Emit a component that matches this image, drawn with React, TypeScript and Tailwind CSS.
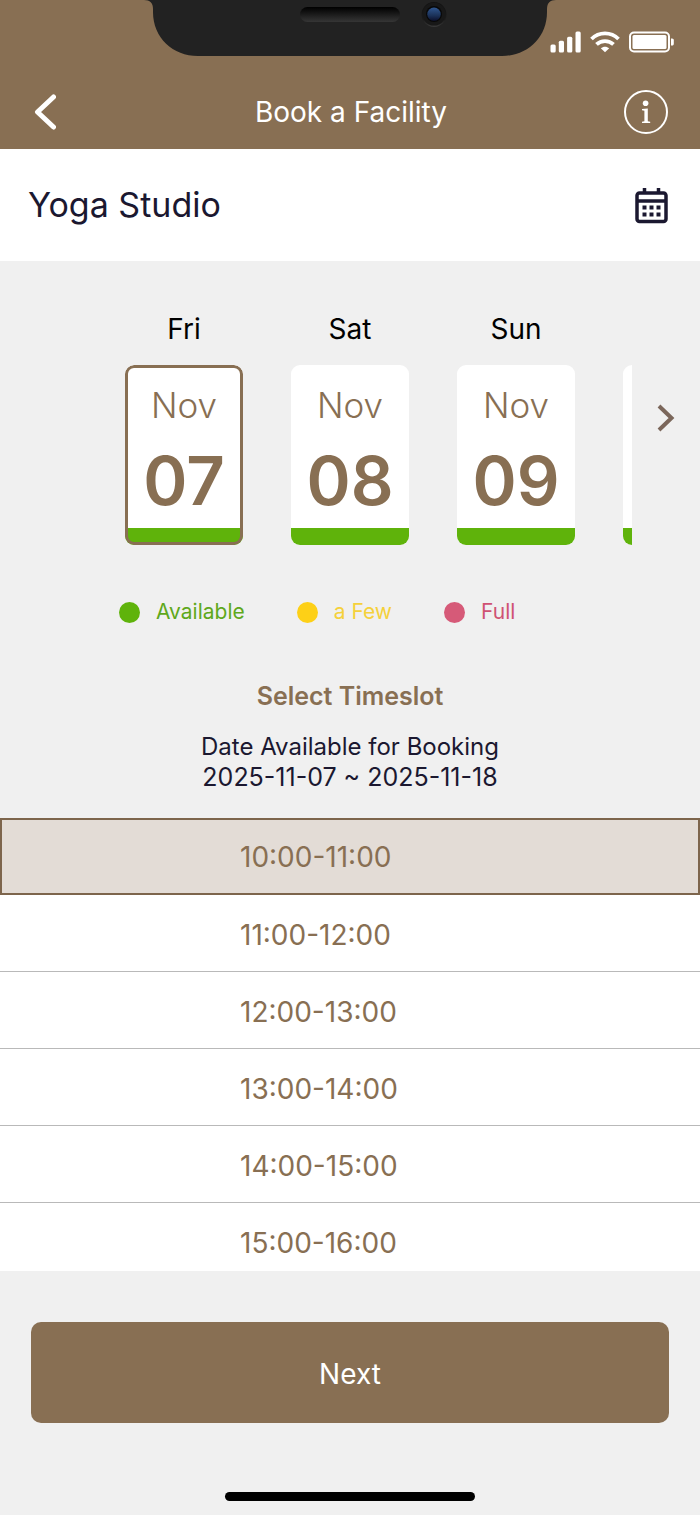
import { useState } from 'react';

const DAYS = [
  { weekday: 'Fri', month: 'Nov', day: '07' },
  { weekday: 'Sat', month: 'Nov', day: '08' },
  { weekday: 'Sun', month: 'Nov', day: '09' },
];

const LEGEND = [
  { label: 'Available', dot: 'bg-[#5fb30b]', text: 'text-[#5fa81c]' },
  { label: 'a Few', dot: 'bg-[#fdd017]', text: 'text-[#f5d13b]' },
  { label: 'Full', dot: 'bg-[#d65a78]', text: 'text-[#cf5273]' },
];

const SLOTS = [
  '10:00-11:00',
  '11:00-12:00',
  '12:00-13:00',
  '13:00-14:00',
  '14:00-15:00',
  '15:00-16:00',
];

export default function App() {
  const [day, setDay] = useState('07');
  const [slot, setSlot] = useState(SLOTS[0]);

  return (
    <div className="flex min-h-screen flex-col bg-[#f0f0f0] font-['Inter',sans-serif] text-[#1b1830]">
      <Header />

      <div className="flex h-28 items-center justify-between bg-white pr-8 pl-7">
        <h2 className="text-[34px] leading-10">Yoga Studio</h2>
        <button type="button" aria-label="Open calendar">
          <CalendarIcon />
        </button>
      </div>

      <DayStrip selected={day} onSelect={setDay} />

      {/* Legend */}
      <ul className="mt-[51px] ml-[119px] flex gap-[52px] text-[21px] leading-8">
        {LEGEND.map((item) => (
          <li key={item.label} className={`flex items-center gap-4 ${item.text}`}>
            <span className={`size-[21px] rounded-full ${item.dot}`} />
            {item.label}
          </li>
        ))}
      </ul>

      <div className="mt-[53px] mb-[26px] text-center text-[25px] leading-[30px]">
        <h3 className="mb-[21px] font-semibold text-[#886f53]">Select Timeslot</h3>
        <p className="text-[24px]">Date Available for Booking</p>
        <p>2025-11-07 ~ 2025-11-18</p>
      </div>

      <SlotList selected={slot} onSelect={setSlot} />

      <div className="px-[31px] pt-[51px]">
        <button
          type="button"
          className="h-[101px] w-full rounded-[10px] bg-[#886f53] pt-0.5 text-[28px] leading-9 text-white"
        >
          Next
        </button>
      </div>

      {/* Home indicator */}
      <div className="mx-auto mt-auto mb-3.5 h-[9px] w-[250px] rounded-full bg-black" />
    </div>
  );
}

function Header() {
  return (
    <header className="relative bg-[#886f53] text-white">
      <div className="absolute inset-x-0 top-0 flex justify-center">
        <Notch />
      </div>
      <div className="flex h-[74px] items-end justify-end pr-[26px] pb-[21px]">
        <StatusIcons />
      </div>
      <div className="grid h-[75px] grid-cols-[1fr_auto_1fr] items-center pr-8 pl-[34px]">
        <button type="button" aria-label="Back" className="justify-self-start">
          <svg width="22" height="36" viewBox="0 0 22 36" fill="none" className="block">
            <path
              d="M19.5 3 3.5 18l16 15"
              stroke="currentColor"
              strokeWidth="5"
              strokeLinecap="round"
              strokeLinejoin="round"
            />
          </svg>
        </button>
        <h1 className="text-[28px] leading-9">Book a Facility</h1>
        <button
          type="button"
          aria-label="Information"
          className="flex size-11 items-center justify-center justify-self-end rounded-full border-2 border-white"
        >
          <svg width="10" height="24" viewBox="0 0 10 24" fill="currentColor">
            <circle cx="4.6" cy="3.2" r="2.8" />
            <path d="M1 9.1 6.8 8.4V21.2l2.4.6V23H1v-1.2l2.4-.6V10.8L1 10.3z" />
          </svg>
        </button>
      </div>
    </header>
  );
}

function Notch() {
  return (
    <svg width="412" height="57" viewBox="0 0 412 57" className="block">
      <defs>
        <linearGradient id="speaker" x1="0" y1="0" x2="0" y2="1">
          <stop offset="0" stopColor="#000" />
          <stop offset="1" stopColor="#363636" />
        </linearGradient>
        <linearGradient id="rim" x1="0" y1="0" x2="0" y2="1">
          <stop offset="0" stopColor="#111" />
          <stop offset="0.7" stopColor="#1c1c1c" />
          <stop offset="1" stopColor="#3a3a3a" />
        </linearGradient>
        <linearGradient id="lens" x1="0" y1="0" x2="0" y2="1">
          <stop offset="0" stopColor="#2f568f" />
          <stop offset="0.6" stopColor="#1b3158" />
          <stop offset="1" stopColor="#0b0f2a" />
        </linearGradient>
      </defs>
      <path
        d="M0 0c6 0 9 3 9 9v3c0 26 20 44 45 44h304c25 0 45-18 45-44V9c0-6 3-9 9-9z"
        fill="#222"
      />
      <rect x="156" y="7" width="100" height="15" rx="7.5" fill="url(#speaker)" />
      <circle cx="290" cy="14.5" r="12.5" fill="url(#rim)" />
      <circle cx="290" cy="14" r="11.5" fill="#181818" />
      <circle cx="290" cy="14" r="8" fill="#080808" />
      <circle cx="290" cy="14.3" r="6.7" fill="url(#lens)" />
    </svg>
  );
}

function StatusIcons() {
  return (
    <svg width="124" height="22" viewBox="0 0 124 22" fill="currentColor" className="block">
      {/* signal */}
      <rect x="0.5" y="13.5" width="5.2" height="8" rx="1.5" />
      <rect x="8.8" y="9.7" width="5.2" height="11.8" rx="1.5" />
      <rect x="17.1" y="5.7" width="5.2" height="15.8" rx="1.5" />
      <rect x="25.5" y="0.5" width="5.2" height="21" rx="1.5" />
      {/* wifi */}
      <g fill="none" stroke="currentColor" strokeWidth="3.8">
        <path d="M41.5 8C49 .6 61 .6 68.500 8" />
        <path d="M46.500 13.400c4.700-4.500 12.300-4.500 17 0" />
      </g>
      <path d="M50.800 17.200c2.500-2.100 5.900-2.100 8.400 0L55 21.300z" />
      {/* battery */}
      <rect x="80" y="1.500" width="39" height="19" rx="4" fill="none" stroke="currentColor" strokeWidth="2" />
      <rect x="82.500" y="4" width="34" height="14" rx="1.5" />
      <path d="M121 7.500h1c1.200 0 1.800.8 1.800 1.800v3.400c0 1-.6 1.800-1.800 1.800h-1z" />
    </svg>
  );
}

function CalendarIcon() {
  return (
    <svg width="33" height="37" viewBox="0 0 33 37" className="block">
      <rect x="2" y="6" width="29" height="28.500" rx="2.500" fill="none" stroke="currentColor" strokeWidth="3.5" />
      <path d="M2 14h29M9.500 1v5M23.500 1v5" stroke="currentColor" strokeWidth="3.5" />
      {[9.5, 16.5, 23.5].map((x) =>
        [20.5, 27.5].map((y) => (
          <rect key={`${x}-${y}`} x={x - 2} y={y - 2} width="4" height="4" fill="currentColor" />
        )),
      )}
    </svg>
  );
}

function DayStrip({
  selected,
  onSelect,
}: {
  selected: string;
  onSelect: (day: string) => void;
}) {
  return (
    <div className="flex pt-[50px]">
      <div className="ml-[125px] flex min-w-0 flex-1 gap-12 overflow-hidden">
        {DAYS.map((d) => (
          <button
            key={d.day}
            type="button"
            aria-pressed={selected === d.day}
            onClick={() => onSelect(d.day)}
            className="w-[118px] shrink-0"
          >
            <span className="block pb-[18px] text-[28px] leading-9 text-black">{d.weekday}</span>
            <span
              className={`relative block h-[180px] overflow-hidden rounded-[9px] bg-white pt-5 text-[#886f53] after:absolute after:inset-0 after:rounded-[9px] ${
                selected === d.day ? 'after:border-3 after:border-[#886f53]' : ''
              }`}
            >
              <span className="block text-[35px] leading-10 font-light">{d.month}</span>
              <span className="block pt-5 text-[67px] leading-[72px] font-semibold">{d.day}</span>
              <span className="absolute inset-x-0 bottom-0 h-[17px] bg-[#5fb30b]" />
            </span>
          </button>
        ))}
        {/* Edge of the next day's card */}
        <div className="flex flex-1 flex-col justify-end">
          <div className="flex h-[180px] flex-col justify-end overflow-hidden rounded-l-[9px] bg-white">
            <div className="h-[17px] bg-[#5fb30b]" />
          </div>
        </div>
      </div>
      <button
        type="button"
        aria-label="Later dates"
        className="flex w-[68px] shrink-0 items-start justify-center pt-[93px] text-[#7b675b]"
      >
        <svg width="18" height="28" viewBox="0 0 18 28" fill="none" className="block">
          <path d="M2 2 14.500 14 2 26" stroke="currentColor" strokeWidth="4" />
        </svg>
      </button>
    </div>
  );
}

function SlotList({
  selected,
  onSelect,
}: {
  selected: string;
  onSelect: (slot: string) => void;
}) {
  return (
    <ul className="max-h-[453px] overflow-y-auto bg-white [scrollbar-width:none]">
      {SLOTS.map((s) => (
        <li key={s}>
          <button
            type="button"
            aria-pressed={selected === s}
            onClick={() => onSelect(s)}
            className={`h-[77px] w-full text-left text-[28px] text-[#886f53] ${
              selected === s
                ? 'border-2 border-[#7d654c] bg-[#e3dcd6] pl-[238px]'
                : 'border-b border-[#b9b9b9] pt-[3px] pl-[240px]'
            }`}
          >
            {s}
          </button>
        </li>
      ))}
    </ul>
  );
}
